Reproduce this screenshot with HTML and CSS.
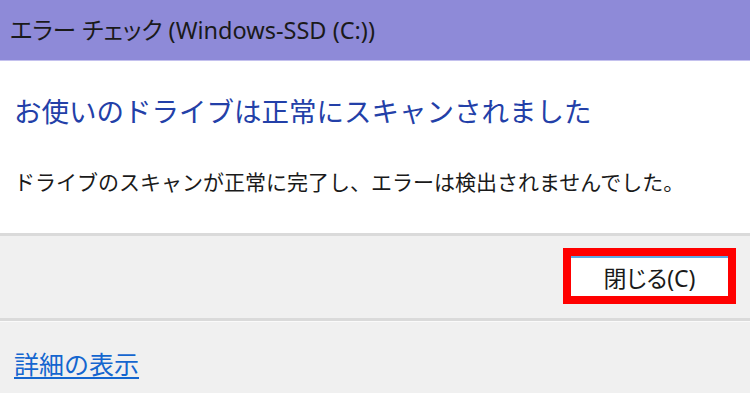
FILE: index.html
```html
<!DOCTYPE html>
<html lang="ja">
<head>
  <meta charset="UTF-8" />
  <title>エラー チェック (Windows-SSD (C:))</title>
  <link rel="stylesheet" href="styles.css">
</head>
<body>
  <div class="dialog">
    <div class="titlebar">エラー チェック (Windows-SSD (C:))</div>

    <div class="content">
      <div class="instruction">お使いのドライブは正常にスキャンされました</div>
      <div class="message">ドライブのスキャンが正常に完了し、エラーは検出されませんでした。</div>
    </div>

    <div class="buttons">
      <div class="highlight">
        <button class="btn">閉じる(C)</button>
      </div>
    </div>

    <div class="details">
      <a href="#" class="link">詳細の表示</a>
    </div>
  </div>
</body>
</html>
```

FILE: styles.css
```css
:root {
  --title: #8e8ad8;
  --heading: #2340a8;
  --link: #1466cf;
  --face: #f0f0f0;
  --line: #dadada;
}

body {
  margin: 0;
  font-family: "Noto Sans", "Noto Sans CJK JP", sans-serif;
  color: #1a1a1a;
  background: var(--face);
}

.dialog {
  width: 750px;
  height: 393px;
  overflow: hidden;
  background: var(--face);
}

.titlebar {
  height: 60px;
  line-height: 60px;
  padding-left: 10px;
  font-size: 23.5px;
  font-feature-settings: "palt";
  background: var(--title);
  border-bottom: 1px solid #c4c1ee;
}

.content {
  background: #fff;
  padding: 34px 14px 0;
  height: 138px;
  border-bottom: 3px solid var(--line);
}

.instruction {
  font-size: 27.5px;
  line-height: 34px;
  color: var(--heading);
}

.message {
  margin-top: 40px;
  font-size: 21px;
  line-height: 26px;
}

.buttons {
  display: flex;
  justify-content: flex-end;
  padding: 12px 14px 14px;
  border-bottom: 3px solid var(--line);
}

.highlight {
  border: 8px solid #ff0000;
}

.btn {
  display: block;
  width: 157px;
  height: 40px;
  padding: 0;
  border: none;
  border-top: 2px solid #5aaae6;
  background: #fff;
  font-family: inherit;
  font-feature-settings: "palt";
  font-size: 23px;
  color: #1a1a1a;
}

.details {
  border-top: 1px solid #fafafa;
  padding: 26px 14px 0;
}

.link {
  font-size: 25px;
  line-height: 32px;
  color: var(--link);
  text-underline-offset: 3px;
}
```
